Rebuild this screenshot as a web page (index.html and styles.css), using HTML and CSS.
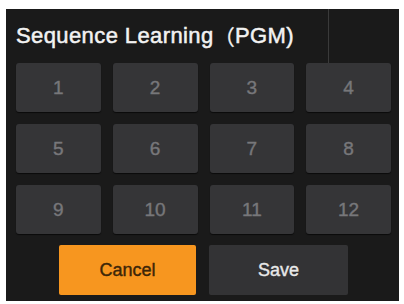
FILE: index.html
```
<!DOCTYPE html>
<html>
<head>
<meta charset="utf-8">
<link rel="stylesheet" href="styles.css">
</head>
<body>
<div class="panel">
  <div class="header">
    <div class="title">Sequence Learning<span class="cjk">（</span>PGM)</div>
    <div class="side"></div>
  </div>
  <div class="grid">
    <div class="key">1</div>
    <div class="key">2</div>
    <div class="key">3</div>
    <div class="key">4</div>
    <div class="key">5</div>
    <div class="key">6</div>
    <div class="key">7</div>
    <div class="key">8</div>
    <div class="key">9</div>
    <div class="key">10</div>
    <div class="key">11</div>
    <div class="key">12</div>
  </div>
  <div class="actions">
    <div class="btn cancel">Cancel</div>
    <div class="btn save">Save</div>
  </div>
</div>
</body>
</html>
```
FILE: styles.css
```
html, body {
  margin: 0;
  padding: 0;
  background: #ffffff;
}
body {
  padding: 9px 0 0 6px;
  font-family: "Liberation Sans", Arial, sans-serif;
}
.panel {
  width: 393px;
  height: 292px;
  background: #1a1a1a;
  box-sizing: border-box;
  display: flex;
  flex-direction: column;
}
.header {
  height: 54px;
  display: flex;
}
.title {
  flex: 1;
  padding-left: 10px;
  padding-bottom: 1px;
  display: flex;
  align-items: center;
  color: #f2f2f2;
  font-size: 22px;
  letter-spacing: 0.4px;
  -webkit-text-stroke: 0.5px #f2f2f2;
}
.cjk {
  font-family: "Noto Sans CJK SC", sans-serif;
  font-size: 21px;
  -webkit-text-stroke: 0.3px #f2f2f2;
}
.side {
  width: 70px;
  border-left: 1px solid #3a3a3a;
}
.grid {
  display: grid;
  grid-template-columns: repeat(4, 1fr);
  grid-auto-rows: 49px;
  gap: 12px;
  padding: 0 8px 0 10px;
}
.key {
  background: #353537;
  border-radius: 3px;
  box-shadow: 0 1px 1px rgba(0,0,0,0.6);
  color: #77777a;
  font-size: 19px;
  -webkit-text-stroke: 0.4px #77777a;
  display: flex;
  align-items: center;
  justify-content: center;
}
.actions {
  display: flex;
  justify-content: center;
  gap: 13px;
  margin-top: 11px;
  padding-left: 2px;
}
.btn {
  height: 50px;
  border-radius: 2px;
  font-size: 18px;
  display: flex;
  align-items: center;
  justify-content: center;
}
.cancel {
  width: 137px;
  background: #f7961f;
  color: #3d2608;
  -webkit-text-stroke: 0.4px #3d2608;
}
.save {
  width: 139px;
  background: #333335;
  color: #e8e8e8;
  -webkit-text-stroke: 0.4px #e8e8e8;
}
```
